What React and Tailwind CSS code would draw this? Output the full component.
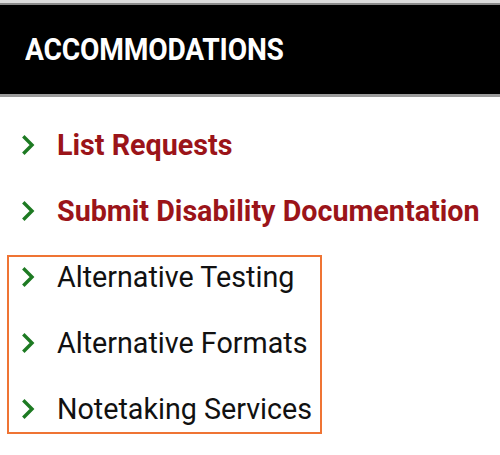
const Chevron = () => (
    <svg width="14" height="22" viewBox="0 0 14 22" className="shrink-0">
        <polyline points="3.5,3.5 11,11 3.5,18.5" fill="none" stroke="#1d7a22" strokeWidth="3.4" strokeLinecap="square" />
    </svg>
);

const Item = ({ label, strong }) => (
    <div className="flex items-center h-[32px] gap-[22px]">
        <Chevron />
        <span
            className={
                strong
                    ? "text-[28.7px] leading-[32px] font-bold text-[#9b1419] whitespace-nowrap"
                    : "text-[28.7px] leading-[32px] text-[#111] whitespace-nowrap"
            }
        >
            {label}
        </span>
    </div>
);

export default function App() {
    return (
        <div className="w-[500px] h-[455px] bg-white overflow-hidden" style={{ fontFamily: "Roboto, 'Liberation Sans', sans-serif" }}>
            <div className="border-t-[3px] border-[#dcdcdc]">
                <div className="border-t-2 border-b-[3px] border-t-[#8a8a8a] border-b-[#9a9a9a] bg-black h-[94px] flex items-center pl-[25px] pb-[2px]">
                    <span className="inline-block origin-left scale-x-[0.88] text-white font-bold text-[32px] leading-none tracking-[-0.2px]">
                        ACCOMMODATIONS
                    </span>
                </div>
            </div>

            <div className="pt-[32px] flex flex-col">
                <div className="flex flex-col gap-[34px] pl-[21px]">
                    <Item label="List Requests" strong />
                    <Item label="Submit Disability Documentation" strong />
                </div>
                <div className="mt-[28px] ml-[7px] w-[315px] border-2 border-[#ef7434] pt-[4px] pb-[7px] pl-[12px] flex flex-col gap-[34px]">
                    <Item label="Alternative Testing" />
                    <Item label="Alternative Formats" />
                    <Item label="Notetaking Services" />
                </div>
            </div>
        </div>
    );
}
